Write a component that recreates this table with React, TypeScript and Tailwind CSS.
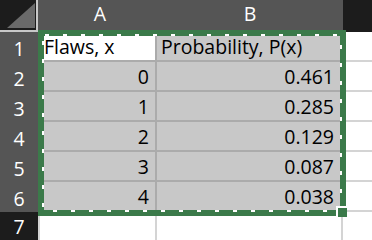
import React from "react";

const font = { fontFamily: '"Open Sans", "Liberation Sans", sans-serif' };

const rows: [string, string][] = [
  ["0", "0.461"],
  ["1", "0.285"],
  ["2", "0.129"],
  ["3", "0.087"],
  ["4", "0.038"],
];

function MarchingAnts() {
  // selection outline: solid green band with white dashes on its inner edge
  const w = 308;
  const h = 186;
  return (
    <svg
      className="absolute left-[38px] top-[30px] pointer-events-none"
      width={w + 4}
      height={h + 6}
      viewBox={`0 0 ${w + 4} ${h + 6}`}
    >
      <rect x={3} y={3} width={w - 6} height={h - 6} fill="none" stroke="#3b7a4a" strokeWidth={6} />
      <rect
        x={5}
        y={5}
        width={w - 10}
        height={h - 10}
        fill="none"
        stroke="#ffffff"
        strokeWidth={2}
        strokeDasharray="4 14"
        strokeDashoffset={-2}
      />
      <rect x={298} y={176} width={11} height={11} fill="#ffffff" />
      <rect x={300} y={178} width={9} height={9} fill="#3b7a4a" />
    </svg>
  );
}

const head = "flex items-end justify-center pb-[3px] text-white text-[19.5px] leading-[20px]";
const sel = "bg-[#c8c8c8] border-r-2 border-b-2 border-[#ababab] flex items-end pb-[3px] text-black text-[19.5px] leading-[20px]";

export default function App() {
  return (
    <div className="relative w-[372px] h-[240px] overflow-hidden bg-white" style={font}>
      <div className="grid grid-cols-[38px_119px_186px_1fr] grid-rows-[32px_repeat(6,30px)_1fr] h-full">
        {/* corner */}
        <div className="relative bg-[#1c1c1c] border-r-2 border-b-2 border-[#c8c8c8]">
          <svg className="absolute left-0 top-0" width="36" height="30">
            <polygon points="7,28 35,3 35,28" fill="#6a6a6a" />
          </svg>
        </div>
        <div className={`bg-[#555555] ${head} pb-[8px] pl-[5px]`}>A</div>
        <div className={`bg-[#555555] ${head} pb-[8px]`}>B</div>
        <div className="bg-[#1c1c1c]" />

        {/* row 1 */}
        <div className={`bg-[#555555] ${head}`}>1</div>
        <div className="bg-white border-r-2 border-b-2 border-[#ababab] flex items-end pl-[6px] pb-[3px] text-black text-[19.5px] leading-[20px]">
          Flaws, x
        </div>
        <div className={`${sel} pl-[4px]`}>Probability, P(x)</div>
        <div className="bg-white border-b-2 border-[#d4d4d4]" />

        {rows.map(([x, p], i) => (
          <React.Fragment key={x}>
            <div className={`bg-[#555555] ${head}`}>{i + 2}</div>
            <div className={`${sel} justify-end pr-[6px]`}>{x}</div>
            <div className={`${sel} justify-end pr-[7px]`}>{p}</div>
            <div className="bg-white border-b-2 border-[#d4d4d4]" />
          </React.Fragment>
        ))}

        {/* row 7 */}
        <div className={`bg-[#1c1c1c] ${head}`}>7</div>
        <div className="bg-white border-l-2 border-r-2 border-[#d4d4d4]" />
        <div className="bg-white border-r-2 border-[#d4d4d4]" />
        <div className="bg-white" />
      </div>
      <MarchingAnts />
    </div>
  );
}
